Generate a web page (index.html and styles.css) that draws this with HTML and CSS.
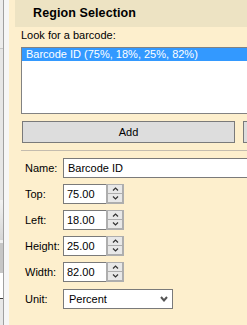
FILE: index.html
```html
<!DOCTYPE html>
<html>
<head>
<meta charset="utf-8">
<link rel="stylesheet" href="styles.css">
</head>
<body>
<div class="screen">
  <div class="side">
    <div class="side-col">
      <div class="sb sb-a"></div>
      <div class="sb sb-b"></div>
      <div class="sb sb-c"></div>
      <div class="sb sb-gap"></div>
      <div class="sb sb-d"></div>
      <div class="sb sb-e"></div>
      <div class="sb sb-f"></div>
    </div>
    <div class="side-line"></div>
    <div class="side-pad"></div>
  </div>
  <div class="panel">
    <div class="title">Region Selection</div>
    <div class="content">
      <div class="caption">Look for a barcode:</div>
      <div class="listbox">
        <div class="item selected">Barcode ID (75%, 18%, 25%, 82%)</div>
      </div>
      <div class="buttons">
        <div class="btn btn-add">Add</div>
        <div class="btn btn-next"></div>
      </div>
      <div class="sep"></div>
      <div class="form">
        <div class="label">Name:</div>
        <div class="field"><div class="text wide">Barcode ID</div></div>

        <div class="label">Top:</div>
        <div class="field">
          <div class="text num">75.00</div>
          <div class="spin">
            <div class="sbtn"><svg width="7" height="4" viewBox="0 0 7 4"><path d="M1 3.5 L3.5 1 L6 3.5" fill="none" stroke="#333" stroke-width="1.2"/></svg></div>
            <div class="sbtn"><svg width="7" height="4" viewBox="0 0 7 4"><path d="M1 0.5 L3.5 3 L6 0.5" fill="none" stroke="#333" stroke-width="1.2"/></svg></div>
          </div>
        </div>

        <div class="label">Left:</div>
        <div class="field">
          <div class="text num">18.00</div>
          <div class="spin">
            <div class="sbtn"><svg width="7" height="4" viewBox="0 0 7 4"><path d="M1 3.5 L3.5 1 L6 3.5" fill="none" stroke="#333" stroke-width="1.2"/></svg></div>
            <div class="sbtn"><svg width="7" height="4" viewBox="0 0 7 4"><path d="M1 0.5 L3.5 3 L6 0.5" fill="none" stroke="#333" stroke-width="1.2"/></svg></div>
          </div>
        </div>

        <div class="label">Height:</div>
        <div class="field">
          <div class="text num">25.00</div>
          <div class="spin">
            <div class="sbtn"><svg width="7" height="4" viewBox="0 0 7 4"><path d="M1 3.5 L3.5 1 L6 3.5" fill="none" stroke="#333" stroke-width="1.2"/></svg></div>
            <div class="sbtn"><svg width="7" height="4" viewBox="0 0 7 4"><path d="M1 0.5 L3.5 3 L6 0.5" fill="none" stroke="#333" stroke-width="1.2"/></svg></div>
          </div>
        </div>

        <div class="label">Width:</div>
        <div class="field">
          <div class="text num">82.00</div>
          <div class="spin">
            <div class="sbtn"><svg width="7" height="4" viewBox="0 0 7 4"><path d="M1 3.5 L3.5 1 L6 3.5" fill="none" stroke="#333" stroke-width="1.2"/></svg></div>
            <div class="sbtn"><svg width="7" height="4" viewBox="0 0 7 4"><path d="M1 0.5 L3.5 3 L6 0.5" fill="none" stroke="#333" stroke-width="1.2"/></svg></div>
          </div>
        </div>

        <div class="label unit-label">Unit:</div>
        <div class="field unit-field">
          <div class="select">
            <span>Percent</span>
            <svg width="8" height="6" viewBox="0 0 8 6"><path d="M1 1 L4 4.5 L7 1" fill="none" stroke="#555" stroke-width="2"/></svg>
          </div>
        </div>
      </div>
    </div>
  </div>
</div>
</body>
</html>
```

FILE: styles.css
```css
html, body {
  margin: 0;
  padding: 0;
}
body {
  width: 247px;
  height: 325px;
  overflow: hidden;
  background: #fdefcd;
  font-family: "Liberation Sans", Arial, sans-serif;
  font-size: 11px;
  color: #000;
}
.screen {
  display: flex;
  width: 247px;
  height: 325px;
  overflow: hidden;
}
.side {
  display: flex;
  flex: 0 0 9px;
  height: 325px;
}
.side-col {
  width: 3px;
  display: flex;
  flex-direction: column;
}
.sb-a { height: 48px; background: #ececec; border-bottom: 1px solid #c8c8c8; }
.sb-b { height: 151px; background: #e6e6e6; }
.sb-c { height: 40px; background: linear-gradient(#f2f2f2, #d6d6d6); }
.sb-gap { height: 3px; background: #f0f0f0; }
.sb-d { height: 30px; background: #c6c6c6; }
.sb-e { height: 25px; background: #ffffff; border-bottom: 1px solid #3c3c3c; }
.sb-f { flex: 1; background: #e8e8e8; }
.side-line {
  width: 1px;
  background: #a0a0a0;
}
.side-pad {
  width: 5px;
  background: #f6f6f6;
}
.panel {
  flex: 0 0 auto;
  width: 260px;
  display: flex;
  flex-direction: column;
}
.title {
  margin-left: 6px;
  height: 27px;
  background: #ede3c3;
  font-weight: bold;
  font-size: 12.5px;
  line-height: 27px;
  padding-left: 18px;
  letter-spacing: 0.1px;
}
.content {
  padding-left: 12px;
  display: flex;
  flex-direction: column;
}
.caption {
  margin-top: 2px;
  height: 13px;
  line-height: 13px;
  margin-bottom: 5px;
}
.listbox {
  width: 240px;
  height: 65px;
  border: 1px solid #828282;
  background: #fff;
  padding: 0;
}
.item {
  height: 13px;
  line-height: 13px;
  padding-left: 4px;
  white-space: nowrap;
}
.item.selected {
  background: #3399ff;
  color: #fff;
}
.buttons {
  display: flex;
  gap: 8px;
  margin-top: 7px;
  margin-left: 1px;
}
.btn {
  height: 20px;
  border: 1px solid #7a7a7a;
  background: #dddddd;
  text-align: center;
  line-height: 20px;
  flex: 0 0 auto;
}
.btn-add { width: 211px; }
.btn-next { width: 100px; }
.sep {
  margin-top: 7px;
  height: 1px;
  background: #c4bcae;
  width: 240px;
}
.form {
  margin-top: 7px;
  padding-left: 4px;
  display: grid;
  grid-template-columns: 38px auto;
  row-gap: 6px;
  align-items: center;
}
.label {
  height: 20px;
  line-height: 20px;
}
.field {
  display: flex;
  height: 20px;
}
.text {
  height: 18px;
  line-height: 18px;
  border: 1px solid #7a7a7a;
  background: #fff;
  padding-left: 4px;
  white-space: nowrap;
}
.text.wide { width: 200px; }
.text.num {
  width: 39px;
  border-right: none;
  padding-left: 3px;
}
.spin {
  width: 14px;
  height: 17px;
  padding: 1px 2px 2px 2px;
  background: #aeaeae;
  display: flex;
  flex-direction: column;
  gap: 1px;
}
.sbtn {
  flex: 1;
  background: #e8e8e8;
  display: flex;
  align-items: center;
  justify-content: center;
}
.unit-label, .unit-field { margin-top: 1px; }
.select {
  width: 108px;
  height: 18px;
  border: 1px solid #7a7a7a;
  background: #fff;
  display: flex;
  align-items: center;
  justify-content: space-between;
  padding-left: 5px;
  padding-right: 4px;
  box-sizing: content-box;
  width: 99px;
}
```
